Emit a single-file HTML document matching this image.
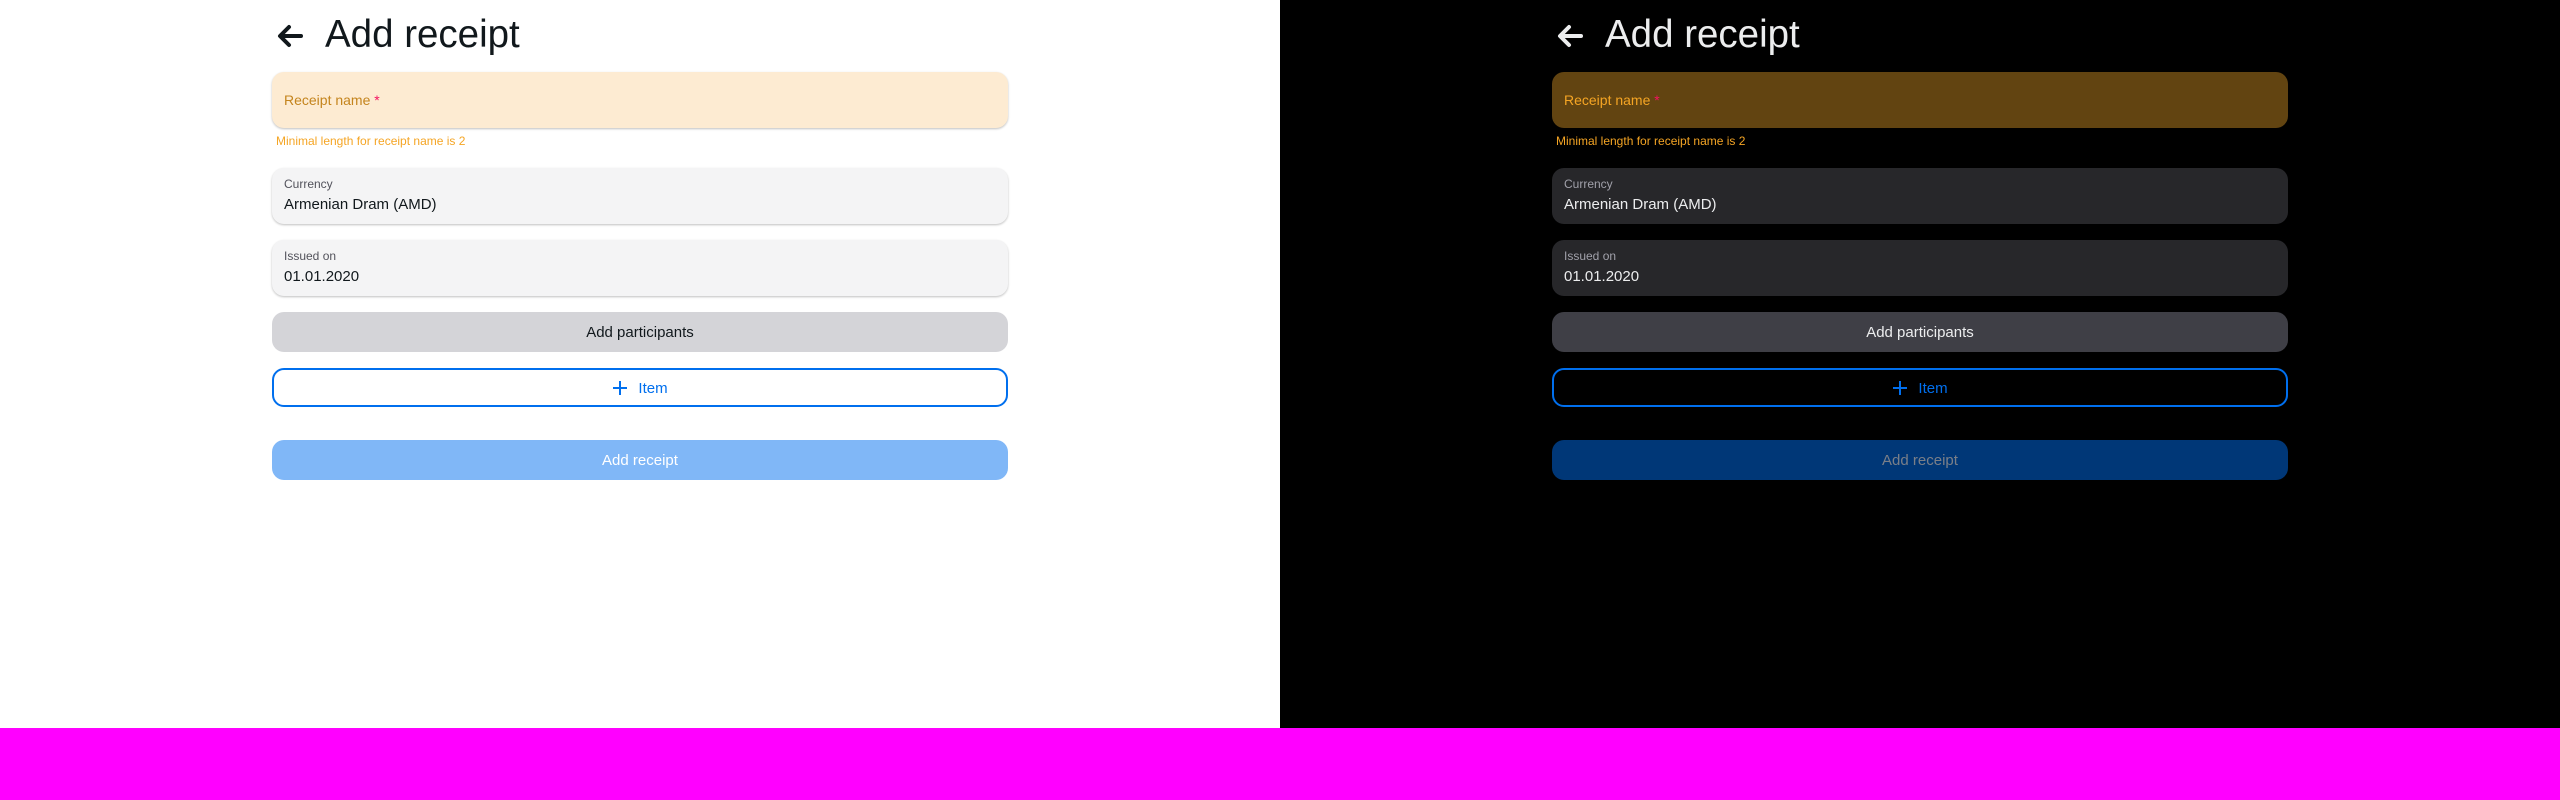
<!DOCTYPE html>
<html><head><meta charset="utf-8"><style>
*{box-sizing:border-box;margin:0;padding:0}
body{width:2560px;height:800px;overflow:hidden;background:#fff;font-family:"Liberation Sans",sans-serif;position:relative}
.half{position:absolute;top:0;width:1280px;height:728px}
.l{left:0;background:#fff;color:#11181c}
.d{left:1280px;background:#000;color:#ecedee}
.mag{position:absolute;left:0;top:728px;width:2560px;height:72px;background:#ff00ff}
.a{position:absolute}
.title{left:325px;top:13px;font-size:38.5px;line-height:44px}
.arrow{left:276px;top:23px}
.f{left:272px;width:736px;border-radius:12px}
.rn{top:72px;height:56px}
.rn span{position:absolute;left:12px;top:20px;font-size:14px}
.err{left:276px;top:134px;font-size:12px}
.cur{top:168px;height:56px}
.iss{top:240px;height:56px}
.lab{position:absolute;left:12px;top:9px;font-size:12px}
.val{position:absolute;left:12px;top:28px;font-size:15px}
.btn{display:flex;align-items:center;justify-content:center;font-size:15px;padding-top:1px}
.ap{top:312px;height:40px}
.it{top:368px;height:39px;border:2px solid #006fee;color:#006fee}
.ar{top:440px;height:40px}
.l .rn{background:#fdebd2;box-shadow:0 1px 2px rgba(0,0,0,.25)}
.l .rn span{color:#c4841d}
.d .rn{background:#624411}
.d .rn span{color:#f5a524}
.err{color:#f5a524}
.l .cur,.l .iss{background:#f4f4f5;box-shadow:0 1px 2px rgba(0,0,0,.25)}
.d .cur,.d .iss{background:#27272a}
.l .lab{color:#52525b}.d .lab{color:#a1a1aa}
.l .ap{background:#d4d4d8}.d .ap{background:#3f3f46}
.l .ar{background:#80b7f7;color:#fff}
.d .ar{background:#003777;color:#7a7f88}
</style></head><body>
<div class="half l">
<svg class="a arrow" width="28" height="26" viewBox="0 0 28 26"><path d="M25 13H5M13 4L4 13l9 9" fill="none" stroke="#11181c" stroke-width="4" stroke-linecap="round" stroke-linejoin="round"/></svg>
<div class="a title">Add receipt</div>
<div class="a f rn"><span>Receipt name<b style="color:#f31260;font-weight:normal;"> *</b></span></div>
<div class="a err">Minimal length for receipt name is 2</div>
<div class="a f cur"><div class="lab">Currency</div><div class="val">Armenian Dram (AMD)</div></div>
<div class="a f iss"><div class="lab">Issued on</div><div class="val">01.01.2020</div></div>
<div class="a f btn ap">Add participants</div>
<div class="a f btn it"><svg width="16" height="16" viewBox="0 0 16 16" style="margin-right:10px"><path d="M8 1v14M1 8h14" stroke="#006fee" stroke-width="2"/></svg>Item</div>
<div class="a f btn ar">Add receipt</div>
</div>
<div class="half d">
<svg class="a arrow" width="28" height="26" viewBox="0 0 28 26"><path d="M25 13H5M13 4L4 13l9 9" fill="none" stroke="#ecedee" stroke-width="4" stroke-linecap="round" stroke-linejoin="round"/></svg>
<div class="a title">Add receipt</div>
<div class="a f rn"><span>Receipt name<b style="color:#f31260;font-weight:normal;"> *</b></span></div>
<div class="a err">Minimal length for receipt name is 2</div>
<div class="a f cur"><div class="lab">Currency</div><div class="val">Armenian Dram (AMD)</div></div>
<div class="a f iss"><div class="lab">Issued on</div><div class="val">01.01.2020</div></div>
<div class="a f btn ap">Add participants</div>
<div class="a f btn it"><svg width="16" height="16" viewBox="0 0 16 16" style="margin-right:10px"><path d="M8 1v14M1 8h14" stroke="#006fee" stroke-width="2"/></svg>Item</div>
<div class="a f btn ar">Add receipt</div>
</div>
<div class="mag"></div>
</body></html>
